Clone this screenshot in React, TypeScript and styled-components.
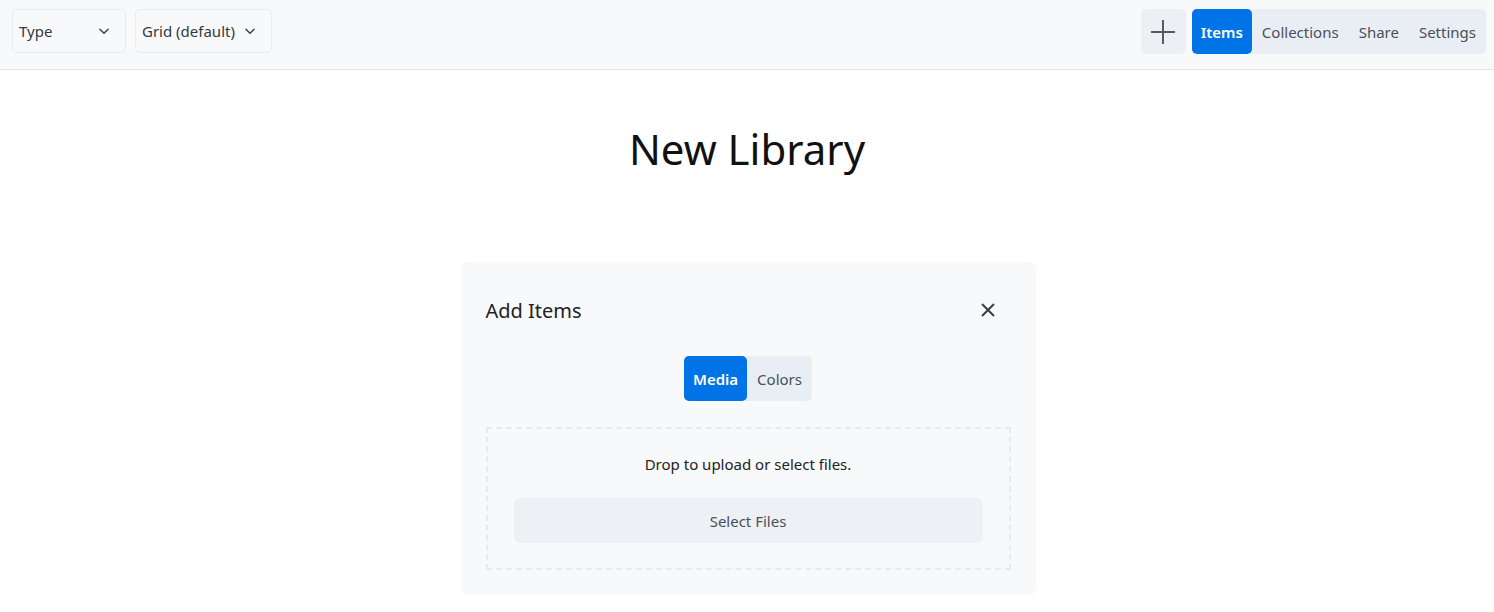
import React from "react";
import styled, { createGlobalStyle } from "styled-components";

const Global = createGlobalStyle`
  html, body { margin: 0; padding: 0; background: #ffffff; }
  body { font-family: "Noto Sans", "Open Sans", sans-serif; color: #212529; }
  * { box-sizing: border-box; }
`;

const Page = styled.div`
  display: flex;
  flex-direction: column;
  width: 100%;
`;

const Header = styled.header`
  height: 70px;
  display: flex;
  align-items: flex-start;
  justify-content: space-between;
  padding: 9px 8px 0 12px;
  background: #f8f9fa;
  border-bottom: 1px solid #e4e8ee;
`;

const Group = styled.div<{ $gap?: number }>`
  display: flex;
  align-items: center;
  gap: ${(p) => p.$gap ?? 0}px;
`;

const Select = styled.div<{ $w: number }>`
  width: ${(p) => p.$w}px;
  height: 44px;
  display: flex;
  align-items: center;
  justify-content: space-between;
  padding: 0 14px 0 6px;
  border: 1px solid #e8ecf1;
  border-radius: 5px;
  font-size: 15px;
  color: #343a40;
  background: #f8f9fa;
`;

const IconButton = styled.div`
  width: 45px;
  height: 45px;
  display: flex;
  align-items: center;
  justify-content: center;
  background: #eceff3;
  border-radius: 5px;
  margin-right: 6px;
`;

const Tabs = styled.div`
  display: flex;
  height: 45px;
  background: #e9eef5;
  border-radius: 5px;
`;

const Tab = styled.div<{ $active?: boolean }>`
  display: flex;
  align-items: center;
  padding: 0 ${(p) => (p.$active ? 9 : 10)}px;
  font-size: 15px;
  border-radius: 5px;
  color: ${(p) => (p.$active ? "#ffffff" : "#495057")};
  background: ${(p) => (p.$active ? "#0073e6" : "transparent")};
  font-weight: ${(p) => (p.$active ? 600 : 400)};
`;

const Title = styled.h1`
  margin: 0;
  padding: 49px 0 0;
  height: 192px;
  text-align: center;
  font-size: 42px;
  font-weight: 400;
  color: #111;
  line-height: 60px;
`;

const Card = styled.section`
  align-self: center;
  width: 575px;
  margin-left: 2px;
  background: #f8f9fb;
  border-radius: 6px;
  padding: 30px 25px 25px;
  display: flex;
  flex-direction: column;
`;

const CardHead = styled.div`
  display: flex;
  align-items: center;
  justify-content: space-between;
  height: 36px;
  padding-right: 16px;
`;

const CardTitle = styled.h2`
  margin: 0;
  font-size: 20px;
  font-weight: 400;
  color: #222;
`;

const Segments = styled.div`
  align-self: center;
  display: flex;
  height: 45px;
  margin-top: 28px;
  background: #e9eef5;
  border-radius: 5px;
`;

const Drop = styled.div`
  margin-top: 26px;
  height: 143px;
  border: 2px dashed #e6ebf1;
  display: flex;
  flex-direction: column;
  align-items: center;
  padding: 24px 26px 0;
`;

const DropText = styled.div`
  font-size: 15px;
  color: #222;
  line-height: 22px;
`;

const SelectButton = styled.div`
  margin-top: 23px;
  width: 100%;
  height: 45px;
  border-radius: 6px;
  background: #edf1f5;
  display: flex;
  align-items: center;
  justify-content: center;
  font-size: 15px;
  color: #495057;
`;

const Chevron = () => (
  <svg width="14" height="14" viewBox="0 0 24 24" fill="none" stroke="#444" strokeWidth="2.6" strokeLinecap="round" strokeLinejoin="round">
    <path d="M5 9l7 7 7-7" />
  </svg>
);

export default function App() {
  return (
    <Page>
      <Global />
      <Header>
        <Group $gap={9}>
          <Select $w={114}>
            <span>Type</span>
            <Chevron />
          </Select>
          <Select $w={137}>
            <span>Grid (default)</span>
            <Chevron />
          </Select>
        </Group>
        <Group>
          <IconButton>
            <svg width="26" height="26" viewBox="0 0 26 26" stroke="#555b61" strokeWidth="2">
              <path d="M13 1v24M1 13h24" />
            </svg>
          </IconButton>
          <Tabs>
            <Tab $active>Items</Tab>
            <Tab>Collections</Tab>
            <Tab>Share</Tab>
            <Tab>Settings</Tab>
          </Tabs>
        </Group>
      </Header>
      <Title>New Library</Title>
      <Card>
        <CardHead>
          <CardTitle>Add Items</CardTitle>
          <svg width="14" height="14" viewBox="0 0 14 14" stroke="#3a3f44" strokeWidth="2">
            <path d="M1 1l12 12M13 1L1 13" />
          </svg>
        </CardHead>
        <Segments>
          <Tab $active>Media</Tab>
          <Tab>Colors</Tab>
        </Segments>
        <Drop>
          <DropText>Drop to upload or select files.</DropText>
          <SelectButton>Select Files</SelectButton>
        </Drop>
      </Card>
    </Page>
  );
}
